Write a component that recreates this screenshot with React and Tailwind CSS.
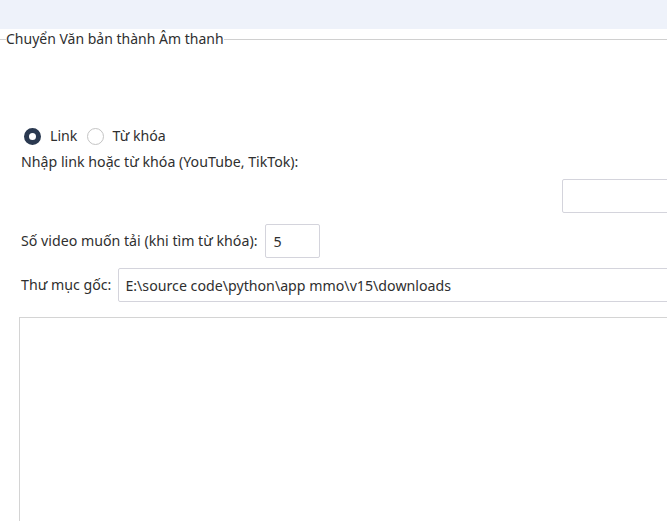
export default function App() {
  return (
    <div
      className="w-[667px] h-[521px] overflow-hidden bg-white text-[14.2px] text-[#2f2f2f]"
      style={{ fontFamily: '"Noto Sans", "Open Sans", sans-serif' }}
    >
      <div className="h-[29px] bg-[#eef2fa]" />

      <div className="h-[20px] flex items-center text-[14px]">
        <div className="w-[6px] h-px bg-[#d0d0d0]" />
        <span className="leading-none whitespace-nowrap">Chuyển Văn bản thành Âm thanh</span>
        <div className="flex-1 h-px bg-[#d0d0d0]" />
      </div>

      <div className="w-[900px]">
        <div className="mt-[78px] pl-[24px] flex items-center h-[18px]">
          <div className="w-[17px] h-[17px] rounded-full border-[5px] border-[#2a3950] bg-white" />
          <span className="ml-[9px]">Link</span>
          <div className="ml-[10px] w-[17px] h-[17px] rounded-full border border-[#c4c4c4] bg-white" />
          <span className="ml-[8px]">Từ khóa</span>
        </div>

        <div className="pl-[21px] mt-[8px] h-[18px] flex items-center">
          Nhập link hoặc từ khóa (YouTube, TikTok):
        </div>

        <div className="mt-[8px] pl-[562px]">
          <input
            type="text"
            className="w-[200px] h-[34px] border border-[#d4d4dc] rounded-[2px] outline-none"
          />
        </div>

        <div className="mt-[11px] pl-[21px] flex items-center gap-[8px]">
          <span>Số video muốn tải (khi tìm từ khóa):</span>
          <input
            type="text"
            defaultValue="5"
            className="w-[55px] h-[34px] border border-[#d4d4dc] rounded-[2px] px-[7px] outline-none text-[#2f2f2f]"
          />
        </div>

        <div className="mt-[10px] pl-[21px] flex items-center gap-[7px]">
          <span>Thư mục gốc:</span>
          <input
            type="text"
            defaultValue="E:\source code\python\app mmo\v15\downloads"
            className="flex-1 h-[34px] border border-[#d4d4dc] rounded-[2px] px-[6px] outline-none text-[#2f2f2f]"
          />
        </div>

        <div className="mt-[15px] ml-[19px] h-[300px] border border-[#d4d4d4]" />
      </div>
    </div>
  );
}
